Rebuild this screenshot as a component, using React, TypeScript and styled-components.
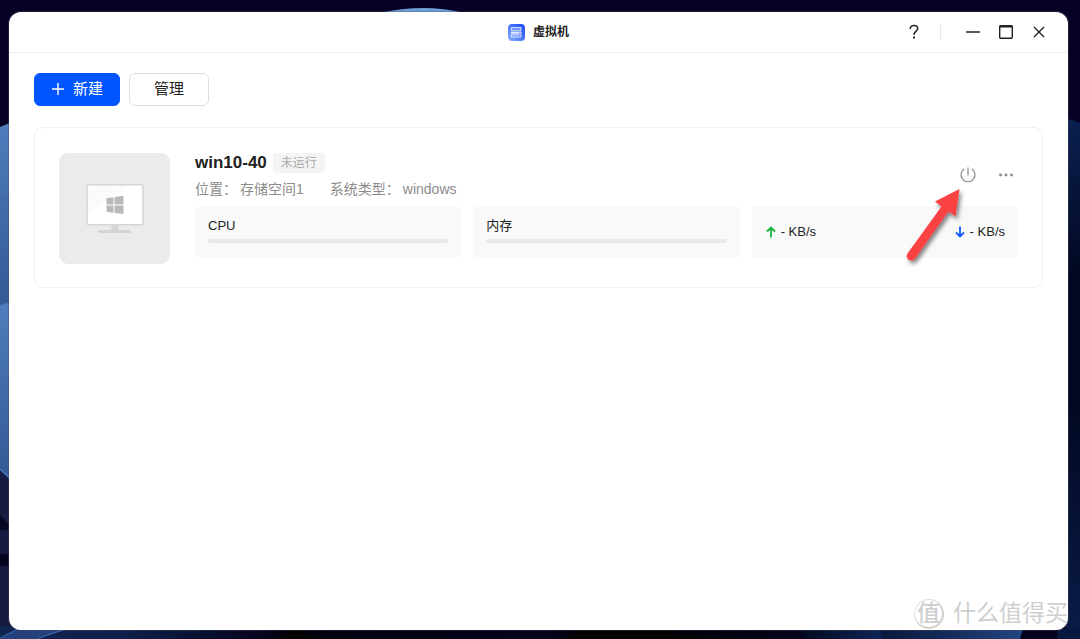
import React from 'react';
import styled, { createGlobalStyle } from 'styled-components';

const GlobalStyle = createGlobalStyle`
  *, *::before, *::after { box-sizing: border-box; }
  html, body, #root { height: 100%; }
  body {
    margin: 0;
    overflow: hidden;
    background: #080126;
    color: #222;
    font-family: 'Liberation Sans', 'Noto Sans CJK SC', sans-serif;
  }
  button { font-family: inherit; cursor: pointer; }
  h1, h2, p, dl, dd { margin: 0; }
`;

const Desktop = styled.div`
  position: relative;
  display: flex;
  height: 100%;
  padding: 12px 12px 9px 9px;
`;

const Wallpaper = styled.svg`
  position: absolute;
  inset: 0;
  width: 100%;
  height: 100%;
`;

const Window = styled.main`
  position: relative;
  display: flex;
  flex-direction: column;
  flex: 1;
  overflow: hidden;
  background: #fff;
  border-radius: 12px;
  box-shadow: 0 0 1px 1px rgba(80, 80, 100, 0.4);
`;

const TitleBar = styled.header`
  display: grid;
  grid-template-columns: 1fr auto 1fr;
  align-items: center;
  height: 41px;
  padding: 0 18px;
  border-bottom: 1px solid #efefef;
`;

const AppTitle = styled.div`
  grid-column: 2;
  display: flex;
  align-items: center;
  gap: 8px;
`;

const TitleText = styled.h1`
  font-size: 12px;
  line-height: 20px;
  font-weight: 700;
`;

const WindowControls = styled.div`
  display: flex;
  justify-content: flex-end;
  align-items: center;
  gap: 11px;
`;

const Divider = styled.span`
  width: 1px;
  height: 16px;
  margin: 0 10px 0 4px;
  background: #eaeaea;
`;

const IconButton = styled.button`
  display: flex;
  align-items: center;
  justify-content: center;
  width: 22px;
  height: 22px;
  padding: 0;
  border: 0;
  background: none;
  color: #222;
`;

const Content = styled.div`
  display: flex;
  flex-direction: column;
  gap: 21px;
  padding: 20px 25px;
`;

const Toolbar = styled.div`
  display: flex;
  gap: 9px;
`;

const ToolButton = styled.button<{ $primary?: boolean }>`
  display: flex;
  align-items: center;
  justify-content: center;
  gap: 8px;
  min-width: ${(p) => (p.$primary ? 86 : 80)}px;
  height: 33px;
  padding: 0 15px 2px;
  border: 1px solid ${(p) => (p.$primary ? '#0055ff' : '#dfdfdf')};
  border-radius: 6px;
  background: ${(p) => (p.$primary ? '#0055ff' : '#fff')};
  color: ${(p) => (p.$primary ? '#fff' : '#222')};
  font-size: 15px;
  line-height: 22px;
  font-weight: 400;
`;

const Card = styled.article`
  display: flex;
  align-items: flex-start;
  gap: 25px;
  padding: 25px 24px 23px;
  min-height: 161px;
  border: 1px solid #f0f0f0;
  border-radius: 9px;
`;

const Thumbnail = styled.div`
  display: flex;
  align-items: center;
  justify-content: center;
  flex: none;
  width: 111px;
  height: 111px;
  border-radius: 9px;
  background: #ebebeb;
`;

const Details = styled.div`
  flex: 1;
  min-width: 0;
`;

const Summary = styled.div`
  display: flex;
  justify-content: space-between;
  align-items: flex-start;
  height: 46px;
  margin-bottom: 7px;
`;

const Identity = styled.div`
  display: flex;
  flex-direction: column;
  gap: 6px;
`;

const NameRow = styled.div`
  display: flex;
  align-items: center;
  gap: 6px;
`;

const MachineName = styled.h2`
  font-size: 17px;
  line-height: 20px;
  font-weight: 700;
`;

const Status = styled.span`
  padding: 0 8px;
  border-radius: 4px;
  background: #f4f4f4;
  color: #aaa;
  font-size: 12px;
  line-height: 20px;
`;

const Facts = styled.dl`
  display: flex;
  gap: 26px;
  color: #8c8c8c;
  font-size: 14px;
  line-height: 20px;
  font-weight: 400;
`;

const Fact = styled.div`
  display: flex;
  gap: 3px;
`;

const Actions = styled.div`
  display: flex;
  gap: 16px;
  padding: 11px 1px 0 0;

  ${IconButton} { color: #888; }
`;

const Stats = styled.div`
  display: grid;
  grid-template-columns: repeat(3, 1fr);
  gap: 12px;
`;

const Stat = styled.section`
  display: flex;
  flex-direction: column;
  height: 52px;
  padding: 12px 13px;
  border-radius: 5px;
  background: #f9f9f9;
  font-size: 13px;
  line-height: 16px;
`;

const Traffic = styled(Stat)`
  flex-direction: row;
  align-items: center;
  justify-content: space-between;
`;

const Rate = styled.span`
  display: flex;
  align-items: center;
  gap: 4px;
`;

const Meter = styled.div`
  height: 4px;
  margin-top: 5px;
  border-radius: 2px;
  background: #e8e8e8;
`;

const Pointer = styled.svg`
  position: absolute;
  top: 166px;
  right: 98px;
`;

const Watermark = styled.div`
  position: absolute;
  right: 0;
  bottom: 0;
  display: flex;
  align-items: center;
  gap: 9px;
  color: #cfcfcf;
  font-size: 23px;
  line-height: 33px;
  font-weight: 400;
  white-space: nowrap;
`;

const Seal = styled.span`
  display: flex;
  align-items: center;
  justify-content: center;
  width: 30px;
  height: 30px;
  border: 1px solid #dedede;
  border-right: 2px solid #cfcfcf;
  border-bottom: 2px solid #cfcfcf;
  border-radius: 50%;
  font-weight: 500;
`;

function DesktopWallpaper() {
  return (
    <Wallpaper viewBox="0 0 1080 639" preserveAspectRatio="none" aria-hidden="true">
      <defs>
        <linearGradient id="petal" x1="0" y1="0" x2="0" y2="1">
          <stop offset="0" stopColor="#4d7ebd" />
          <stop offset="1" stopColor="#345894" />
        </linearGradient>
        <linearGradient id="side" x1="0" y1="0" x2="0" y2="1">
          <stop offset="0" stopColor="#0b2050" />
          <stop offset="0.3" stopColor="#020822" />
          <stop offset="0.55" stopColor="#020822" />
          <stop offset="1" stopColor="#0a1c48" />
        </linearGradient>
        <linearGradient id="floor" x1="0" y1="0" x2="1" y2="0">
          <stop offset="0" stopColor="#122450" />
          <stop offset="0.12" stopColor="#0d1e48" />
          <stop offset="0.25" stopColor="#04021b" />
          <stop offset="0.27" stopColor="#000" />
          <stop offset="0.3" stopColor="#01010f" />
          <stop offset="0.51" stopColor="#04011c" />
          <stop offset="0.54" stopColor="#000" />
          <stop offset="0.62" stopColor="#000005" />
          <stop offset="0.74" stopColor="#03021c" />
        </linearGradient>
        <linearGradient id="glow" x1="0" y1="0" x2="1" y2="0">
          <stop offset="0" stopColor="#020920" />
          <stop offset="0.35" stopColor="#0d2354" />
          <stop offset="0.37" stopColor="#08183c" />
          <stop offset="1" stopColor="#234580" />
        </linearGradient>
      </defs>
      <rect width="1080" height="639" fill="#080126" />
      <path d="M380 13Q424 3 464 13Z" fill="#6ca0d6" />
      <path d="M0 127L12 122V310H0Z" fill="url(#petal)" />
      <path d="M0 199L12 194" stroke="#3a69ad" />
      <path d="M0 305L12 302V482L0 472Z" fill="url(#petal)" />
      <path d="M0 468L12 479V639H0Z" fill="#171b41" />
      <path d="M0 515Q4 520 12 527V530H0ZM0 554H12V566H0Z" fill="#060620" />
      <path d="M0 469L12 480" stroke="#3f76b9" strokeWidth="2" />
      <rect x="0" y="626" width="1080" height="13" fill="url(#floor)" />
      <path d="M0 638L17 629H68L38 639H0Z" fill="#25417b" />
      <path d="M0 638L20 628M38 639Q50 633 72 628" fill="none" stroke="#3869b8" strokeWidth="1" />
      <path d="M802 629H1023L1020 639H805Z" fill="url(#glow)" />
      <path d="M1066 118L1080 123V639H1066Z" fill="url(#side)" />
      <path d="M1058 629H1080V639H1057Z" fill="#07183e" />
    </Wallpaper>
  );
}

function MachineIcon() {
  return (
    <svg width="17" height="17" viewBox="0 0 17 17" aria-hidden="true">
      <defs>
        <linearGradient id="appTile" x1="0" y1="1" x2="1" y2="0">
          <stop offset="0" stopColor="#8fb4ff" />
          <stop offset="0.5" stopColor="#4a76fb" />
          <stop offset="1" stopColor="#1f48f2" />
        </linearGradient>
      </defs>
      <rect width="17" height="17" rx="4" fill="url(#appTile)" />
      <path d="M3.500 3.500h9.500v3.300h-9.500z" fill="#6f96ff" stroke="#dfe9ff" strokeWidth="0.900" />
      <path d="M3 7.800h10.500v2H3z" fill="#e6eeff" />
      <path d="M3.500 10.800h9.500v2.200h-9.500z" fill="#6f96ff" stroke="#e6eeff" strokeWidth="0.900" />
      <path d="M11 8.800h1.500M11 11.900h1.500" stroke="#4a76fb" strokeWidth="0.800" />
    </svg>
  );
}

function MonitorArt() {
  return (
    <svg width="58" height="50" viewBox="0 0 58 50" role="img" aria-label="windows">
      <defs>
        <linearGradient id="screen" x1="0" y1="0" x2="1" y2="1">
          <stop offset="0" stopColor="#fff" />
          <stop offset="0.15" stopColor="#fafafa" />
          <stop offset="0.38" stopColor="#fbfbfb" />
          <stop offset="0.39" stopColor="#fff" />
        </linearGradient>
      </defs>
      <path d="M26 40h6l1 7h-8z" fill="#d4d4d4" />
      <rect x="12" y="46" width="33" height="3" rx="1.500" fill="#d4d4d4" />
      <rect x="1" y="0.800" width="56" height="40" rx="2" fill="url(#screen)" stroke="#d6d6d6" strokeWidth="1.600" />
      <path d="M20.500 14.200l7-1v7.300h-7zM28.500 13.100l9-1.300v8.700h-9zM20.500 21.500h7v7.300l-7-1zM28.500 21.500h9v8.600l-9-1.300z" fill="#b9b9b9" />
    </svg>
  );
}

function RateArrow({ down }: { down?: boolean }) {
  return (
    <svg width="12" height="14" viewBox="0 0 12 14" fill="none" stroke={down ? '#0f5cff' : '#17b43c'} strokeWidth="1.800" aria-hidden="true">
      <path d={down ? 'M6 1.500v10M2 7.500l4 4 4-4' : 'M6 12.500v-10M2 6.500l4-4 4 4'} />
    </svg>
  );
}

export default function App() {
  return (
    <>
      <GlobalStyle />
      <Desktop>
        <DesktopWallpaper />
        <Window>
          <TitleBar>
            <AppTitle>
              <MachineIcon />
              <TitleText>虚拟机</TitleText>
            </AppTitle>
            <WindowControls>
              <IconButton aria-label="帮助">
                <svg width="10" height="16" viewBox="0 0 10 16" fill="none" stroke="currentColor" strokeWidth="1.600">
                  <path d="M1.300 5V4.700C1.300 2.700 2.800 1.500 5 1.500S8.700 2.700 8.700 4.500C8.700 7 5 7.300 5 10.800" />
                  <path d="M5 12.600v2" strokeWidth="2" />
                </svg>
              </IconButton>
              <Divider />
              <IconButton aria-label="最小化">
                <svg width="16" height="16" viewBox="0 0 16 16" stroke="currentColor" strokeWidth="1.400">
                  <path d="M1 8h14" />
                </svg>
              </IconButton>
              <IconButton aria-label="最大化">
                <svg width="16" height="16" viewBox="0 0 16 16" fill="none" stroke="currentColor">
                  <rect x="1.700" y="1.700" width="12.600" height="12.600" rx="1" strokeWidth="1.400" />
                  <path d="M1.500 2.400h13" strokeWidth="2" />
                </svg>
              </IconButton>
              <IconButton aria-label="关闭">
                <svg width="16" height="16" viewBox="0 0 16 16" stroke="currentColor" strokeWidth="1.400">
                  <path d="M3 3l10 10M13 3L3 13" />
                </svg>
              </IconButton>
            </WindowControls>
          </TitleBar>

          <Content>
            <Toolbar>
              <ToolButton $primary>
                <svg width="14" height="14" viewBox="0 0 14 14" stroke="currentColor" strokeWidth="1.400" aria-hidden="true">
                  <path d="M7 1v12M1 7h12" />
                </svg>
                新建
              </ToolButton>
              <ToolButton>管理</ToolButton>
            </Toolbar>

            <Card>
              <Thumbnail>
                <MonitorArt />
              </Thumbnail>
              <Details>
                <Summary>
                  <Identity>
                    <NameRow>
                      <MachineName>win10-40</MachineName>
                      <Status>未运行</Status>
                    </NameRow>
                    <Facts>
                      <Fact>
                        <dt>位置：</dt>
                        <dd>存储空间1</dd>
                      </Fact>
                      <Fact>
                        <dt>系统类型：</dt>
                        <dd>windows</dd>
                      </Fact>
                    </Facts>
                  </Identity>
                  <Actions>
                    <IconButton aria-label="开机">
                      <svg width="18" height="18" viewBox="0 0 18 18" fill="none" stroke="currentColor" strokeWidth="1.200">
                        <path d="M9 1.500v8M5.300 2.800a7 7 0 1 0 7.400 0" />
                      </svg>
                    </IconButton>
                    <IconButton aria-label="更多">
                      <svg width="16" height="16" viewBox="0 0 16 16" fill="currentColor">
                        <circle cx="2.500" cy="8" r="1.400" />
                        <circle cx="8" cy="8" r="1.400" />
                        <circle cx="13.500" cy="8" r="1.400" />
                      </svg>
                    </IconButton>
                  </Actions>
                </Summary>
                <Stats>
                  <Stat>
                    CPU
                    <Meter />
                  </Stat>
                  <Stat>
                    内存
                    <Meter />
                  </Stat>
                  <Traffic>
                    <Rate>
                      <RateArrow />- KB/s
                    </Rate>
                    <Rate>
                      <RateArrow down />- KB/s
                    </Rate>
                  </Traffic>
                </Stats>
              </Details>
            </Card>
          </Content>

          <Pointer width="75" height="95" viewBox="0 0 75 95" aria-hidden="true">
            <defs>
              <filter id="pointerShadow" x="-20%" y="-20%" width="150%" height="150%">
                <feDropShadow dx="2" dy="3" stdDeviation="2" floodColor="#000" floodOpacity="0.5" />
              </filter>
            </defs>
            <path
              d="M64.500 11L40 23.500L46.500 28.500L12.500 75.500A4.300 4.300 0 0 0 20 80.500L53.500 33.500L60.500 38.500Z"
              fill="#fb4343"
              filter="url(#pointerShadow)"
            />
          </Pointer>

          <Watermark>
            <Seal>值</Seal>
            什么值得买
          </Watermark>
        </Window>
      </Desktop>
    </>
  );
}
